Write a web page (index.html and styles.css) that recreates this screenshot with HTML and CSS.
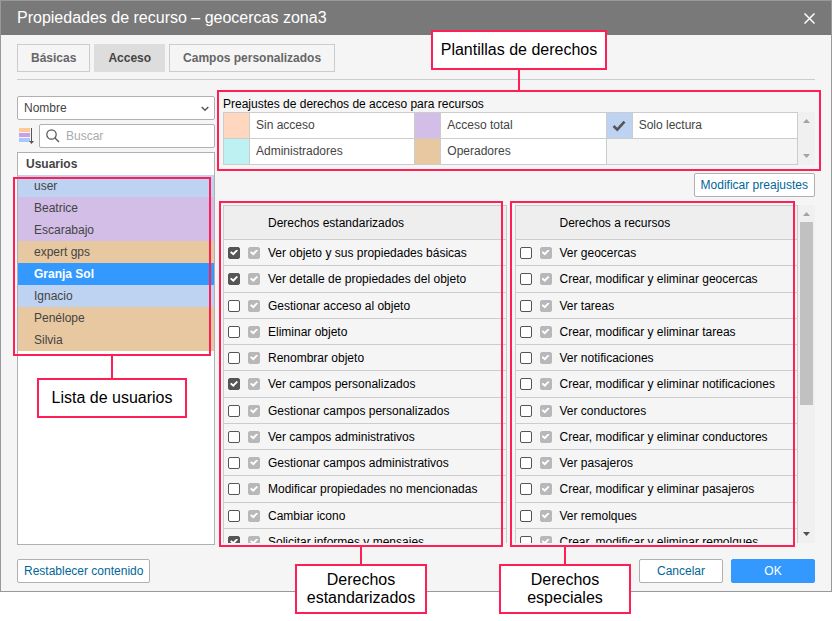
FILE: index.html
```html
<!DOCTYPE html>
<html lang="es">
<head>
  <meta charset="UTF-8" />
  <meta name="viewport" content="width=device-width, initial-scale=1.0"/>
  <title>Propiedades de recurso</title>
  <link rel="stylesheet" href="styles.css">
</head>
<body>
  <div class="dialog">
    <header class="titlebar">
      <h1>Propiedades de recurso – geocercas zona3</h1>
      <button class="close" aria-label="Cerrar">
        <svg width="11" height="11" viewBox="0 0 11 11"><path d="M0.5 0.5L10.5 10.5M10.5 0.5L0.5 10.5" stroke="#fff" stroke-width="1.5" fill="none"/></svg>
      </button>
    </header>

    <div class="content">
      <nav class="tabs">
        <button class="tab">Básicas</button>
        <button class="tab active">Acceso</button>
        <button class="tab">Campos personalizados</button>
      </nav>

      <div class="columns">
        <section class="users">
          <div class="sort">
            <select aria-label="Ordenar por">
              <option>Nombre</option>
            </select>
            <svg class="chevron" width="8" height="6" viewBox="0 0 8 6"><path d="M0.7 1L4 4.3L7.3 1" stroke="#555" stroke-width="1.4" fill="none"/></svg>
          </div>
          <div class="search-row">
            <svg width="18" height="18" viewBox="0 0 18 18">
              <path fill="#ffc896" d="M2 1h11v4H2z"/>
              <path fill="#c8a0e6" d="M2 6h11v4H2z"/>
              <path fill="#aac8fa" d="M2 11h11v4H2z"/>
              <path d="M14.500 1V15" stroke="#555" stroke-width="1"/>
              <path d="M12 14h5l-2.500 3z" fill="#555"/>
            </svg>
            <div class="search">
              <svg width="14" height="14" viewBox="0 0 14 14"><circle cx="5.500" cy="5.500" r="4.700" stroke="#555" stroke-width="1.200" fill="none"/><path d="M9 9l4 4" stroke="#555" stroke-width="1.300"/></svg>
              <input type="text" placeholder="Buscar" aria-label="Buscar">
            </div>
          </div>
          <div class="user-list">
            <h2>Usuarios</h2>
            <ul>
              <li class="blue">user</li>
              <li class="purple">Beatrice</li>
              <li class="purple">Escarabajo</li>
              <li class="tan">expert gps</li>
              <li class="selected">Granja Sol</li>
              <li class="blue">Ignacio</li>
              <li class="tan">Penélope</li>
              <li class="tan">Silvia</li>
            </ul>
            <div class="mark mark-users"><span class="note note-below">Lista de usuarios</span></div>
          </div>
        </section>

        <section class="access">
          <div class="presets">
            <h2>Preajustes de derechos de acceso para recursos</h2>
            <div class="preset-row">
              <div class="preset-grid">
                <div class="swatch peach"></div><div class="preset">Sin acceso</div>
                <div class="swatch purple"></div><div class="preset">Acceso total</div>
                <div class="swatch blue">
                  <svg width="14" height="12" viewBox="0 0 14 12"><path d="M1.500 6L5.300 9.700L12.500 1.700" stroke="#555" stroke-width="2.600" fill="none"/></svg>
                </div><div class="preset">Solo lectura</div>
                <div class="swatch cyan"></div><div class="preset">Administradores</div>
                <div class="swatch tan"></div><div class="preset">Operadores</div>
                <div class="empty"></div>
              </div>
              <div class="scrollbar off">
                <svg width="7" height="4" viewBox="0 0 7 4"><path d="M0 4L3.500 0L7 4z"/></svg>
                <svg width="7" height="4" viewBox="0 0 7 4"><path d="M0 0L3.500 4L7 0z"/></svg>
              </div>
            </div>
            <div class="mark mark-presets"><span class="note note-above">Plantillas de derechos</span></div>
          </div>

          <button class="btn modify">Modificar preajustes</button>

          <div class="rights">
            <div class="rights-scroll">
              <div class="rights-tables">
                <table>
                  <thead><tr><th colspan="2"></th><th>Derechos estandarizados</th></tr></thead>
                  <tbody id="standard"></tbody>
                </table>
                <table>
                  <thead><tr><th colspan="2"></th><th>Derechos a recursos</th></tr></thead>
                  <tbody id="special"></tbody>
                </table>
              </div>
              <div class="scrollbar">
                <svg class="dim" width="7" height="4" viewBox="0 0 7 4"><path d="M0 4L3.500 0L7 4z"/></svg>
                <div class="thumb"></div>
                <svg width="7" height="4" viewBox="0 0 7 4"><path d="M0 0L3.500 4L7 0z"/></svg>
              </div>
            </div>
            <div class="mark mark-standard"><span class="note note-rights">Derechos estandarizados</span></div>
            <div class="mark mark-special"><span class="note note-rights">Derechos especiales</span></div>
          </div>
        </section>
      </div>

      <footer class="actions">
        <button class="btn">Restablecer contenido</button>
        <div class="confirm">
          <button class="btn">Cancelar</button>
          <button class="btn primary">OK</button>
        </div>
      </footer>
    </div>
  </div>

  <script>
    const standard = [
      ["Ver objeto y sus propiedades básicas", true],
      ["Ver detalle de propiedades del objeto", true],
      ["Gestionar acceso al objeto", false],
      ["Eliminar objeto", false],
      ["Renombrar objeto", false],
      ["Ver campos personalizados", true],
      ["Gestionar campos personalizados", false],
      ["Ver campos administrativos", false],
      ["Gestionar campos administrativos", false],
      ["Modificar propiedades no mencionadas", false],
      ["Cambiar icono", false],
      ["Solicitar informes y mensajes", true]
    ];
    const special = [];
    ["geocercas", "tareas", "notificaciones", "conductores", "pasajeros", "remolques"].forEach(function (name) {
      special.push(["Ver " + name, false]);
      special.push(["Crear, modificar y eliminar " + name, false]);
    });

    function fillRights(id, rights) {
      document.getElementById(id).innerHTML = rights.map(function (right, i) {
        const box = id + i;
        return `<tr>
          <td class="own"><input type="checkbox" id="${box}" ${right[1] ? "checked" : ""}></td>
          <td class="inherited"><input type="checkbox" aria-label="${right[0]} (preajuste)" checked disabled></td>
          <td><label for="${box}">${right[0]}</label></td>
        </tr>`;
      }).join("");
    }
    fillRights("standard", standard);
    fillRights("special", special);
  </script>
</body>
</html>
```
FILE: styles.css
```css
* {
  box-sizing: border-box;
}
body {
  margin: 0;
  padding-bottom: 29px;
  background: #fff;
  color: #000;
  font: 12px/16px "Liberation Sans", Arial, sans-serif;
}
h1, h2, ul {
  margin: 0;
  padding: 0;
  font-weight: normal;
}
h2 {
  font-size: 12px;
}
button, input, select {
  font: inherit;
}
svg {
  flex: none;
}
.dialog {
  border: 1px solid #999;
  background: #f5f5f5;
}
.titlebar {
  display: flex;
  align-items: center;
  justify-content: space-between;
  height: 34px;
  padding: 0 16px;
  background: #797979;
  color: #fff;
}
.titlebar h1 {
  font-size: 16px;
}
.close {
  display: flex;
  padding: 0;
  border: 0;
  background: none;
}
.content {
  padding: 9px 16px 8px;
}
.tabs {
  display: flex;
  gap: 4px;
  padding-bottom: 7px;
  border-bottom: 1px solid #ccc;
}
.tab {
  height: 28px;
  padding: 0 13px;
  border: 1px solid #ccc;
  background: #f5f5f5;
  color: #666;
  font-weight: bold;
}
.tab.active {
  border-color: #ddd;
  background: #ddd;
  color: #444;
}
.columns {
  display: flex;
  gap: 8px;
  padding-top: 16px;
}

/* users */
.users {
  display: flex;
  flex-direction: column;
  gap: 4px;
  width: 198px;
  color: #444;
}
.sort {
  position: relative;
}
.sort select {
  display: block;
  width: 100%;
  height: 24px;
  padding: 0 6px;
  border: 1px solid #b0b0b0;
  border-radius: 2px;
  background: #fff;
  color: #444;
  appearance: none;
}
.chevron {
  position: absolute;
  right: 6px;
  top: 10px;
}
.search-row {
  display: flex;
  align-items: center;
  gap: 4px;
}
.search {
  display: flex;
  flex: 1;
  align-items: center;
  gap: 6px;
  min-width: 0;
  height: 24px;
  padding: 0 6px;
  border: 1px solid #b0b0b0;
  border-radius: 2px;
  background: #fff;
}
.search input {
  flex: 1;
  min-width: 0;
  padding: 0;
  border: 0;
  outline: 0;
  background: none;
}
.search input::placeholder {
  color: #aaa;
}
.user-list {
  position: relative;
  flex: 1;
  border: 1px solid #b0b0b0;
  background: #fff;
}
.user-list h2 {
  padding-left: 8px;
  font-weight: bold;
  line-height: 22px;
}
.user-list li {
  padding-left: 16px;
  line-height: 22px;
  list-style: none;
}
.blue {
  background: #bed2f2;
}
.purple {
  background: #d2bee6;
}
.tan {
  background: #e8c8a0;
}
.peach {
  background: #ffd7be;
}
.cyan {
  background: #bef2f2;
}
.user-list .selected {
  background: #39f;
  color: #fff;
  font-weight: bold;
}

/* presets */
.access {
  display: flex;
  flex: 1;
  flex-direction: column;
}
.presets {
  position: relative;
}
.preset-row {
  display: flex;
}
.preset-grid {
  display: grid;
  flex: 1;
  grid-template-columns: repeat(3, 25px 1fr);
  grid-auto-rows: 25px;
  gap: 1px;
  padding: 1px;
  background: #ccc;
}
.swatch {
  display: flex;
  align-items: center;
  justify-content: center;
}
.preset {
  padding-left: 6px;
  background: #fff;
  color: #444;
  line-height: 25px;
}
.empty {
  grid-column: span 2;
  background: #f5f5f5;
}
.scrollbar {
  display: flex;
  flex-direction: column;
  align-items: center;
  justify-content: space-between;
  width: 17px;
  padding: 7px 0;
  background: #f0f0f0;
  fill: #505050;
}
.off, .dim {
  fill: #a3a3a3;
}
.thumb {
  width: 13px;
  height: 183px;
  margin: 6px 0 auto;
  background: #c1c1c1;
}

.btn {
  height: 24px;
  padding: 0 6px;
  border: 1px solid #b0b0b0;
  border-radius: 2px;
  background: #fff;
  color: #069;
}
.modify {
  align-self: flex-end;
  margin: 8px 0;
}

/* rights */
.rights {
  position: relative;
  margin-bottom: 2px;
}
.rights-scroll {
  display: flex;
  height: 338px;
  overflow: hidden;
}
.rights-tables {
  display: grid;
  flex: 1;
  grid-template-columns: 1fr 1fr;
  gap: 8px;
}
.rights table {
  align-self: start;
  width: 100%;
  border: solid #ccc;
  border-width: 1px 1px 0;
  border-spacing: 0;
  table-layout: fixed;
}
.rights th, .rights td {
  height: 26px;
  padding: 0;
  border-bottom: 1px solid #ccc;
  text-align: left;
  font-weight: normal;
  white-space: nowrap;
}
.rights tr:nth-child(4n+2) td {
  height: 27px;
}
.rights th {
  height: 34px;
  background: #eee;
}
.rights th:first-child {
  width: 44px;
}
.rights .own {
  padding-left: 4px;
}
.rights .inherited {
  padding-left: 2px;
}
.rights input {
  display: block;
  width: 12px;
  height: 12px;
  margin: 0;
  border: 1px solid #555;
  border-radius: 2px;
  background: #fff;
  appearance: none;
}
.rights input:checked {
  background: #555;
}
.rights input:disabled {
  border-color: #b8b8b8;
  background: #b8b8b8;
}
.rights input:checked::after {
  content: "";
  display: block;
  width: 8px;
  height: 6px;
  margin: 2px 1px;
  background: #fff;
  clip-path: polygon(0 50%, 16% 30%, 40% 55%, 82% 0, 100% 18%, 42% 100%);
}

.actions, .confirm {
  display: flex;
  justify-content: space-between;
  gap: 8px;
}
.actions {
  padding-top: 14px;
}
.confirm .btn {
  width: 84px;
}
.btn.primary {
  border-color: #39f;
  background: #39f;
  color: #fff;
}

/* callouts */
.mark {
  position: absolute;
  border: 2px solid #ff1f57;
  pointer-events: none;
}
.mark-users {
  top: 24px;
  left: -5px;
  right: 3px;
  height: 179px;
}
.mark-presets {
  inset: -6px;
}
.mark-standard {
  top: -4px;
  bottom: -4px;
  left: -4px;
  right: calc(50% + 16px);
}
.mark-special {
  top: -4px;
  bottom: -4px;
  left: calc(50% - 9px);
  right: 20px;
}
.note {
  position: absolute;
  left: 50%;
  padding: 9px 4px;
  border: 2px solid #ff1f57;
  background: #fff;
  color: #000;
  font-size: 16px;
  line-height: 18px;
  text-align: center;
  transform: translateX(-50%);
}
.note::before {
  content: "";
  position: absolute;
  left: 50%;
  bottom: calc(100% + 2px);
  width: 2px;
  height: 22px;
  margin-left: -1px;
  background: #ff1f57;
}
.note-below {
  top: calc(100% + 24px);
  width: 150px;
}
.note-above {
  bottom: calc(100% + 22px);
  width: 176px;
}
.note-above::before {
  top: calc(100% + 2px);
  bottom: auto;
}
.note-rights {
  top: calc(100% + 19px);
  width: 132px;
  padding: 5px 6px;
}
.note-rights::before {
  height: 18px;
}
.mark-special .note-rights {
  left: 53px;
}
```
